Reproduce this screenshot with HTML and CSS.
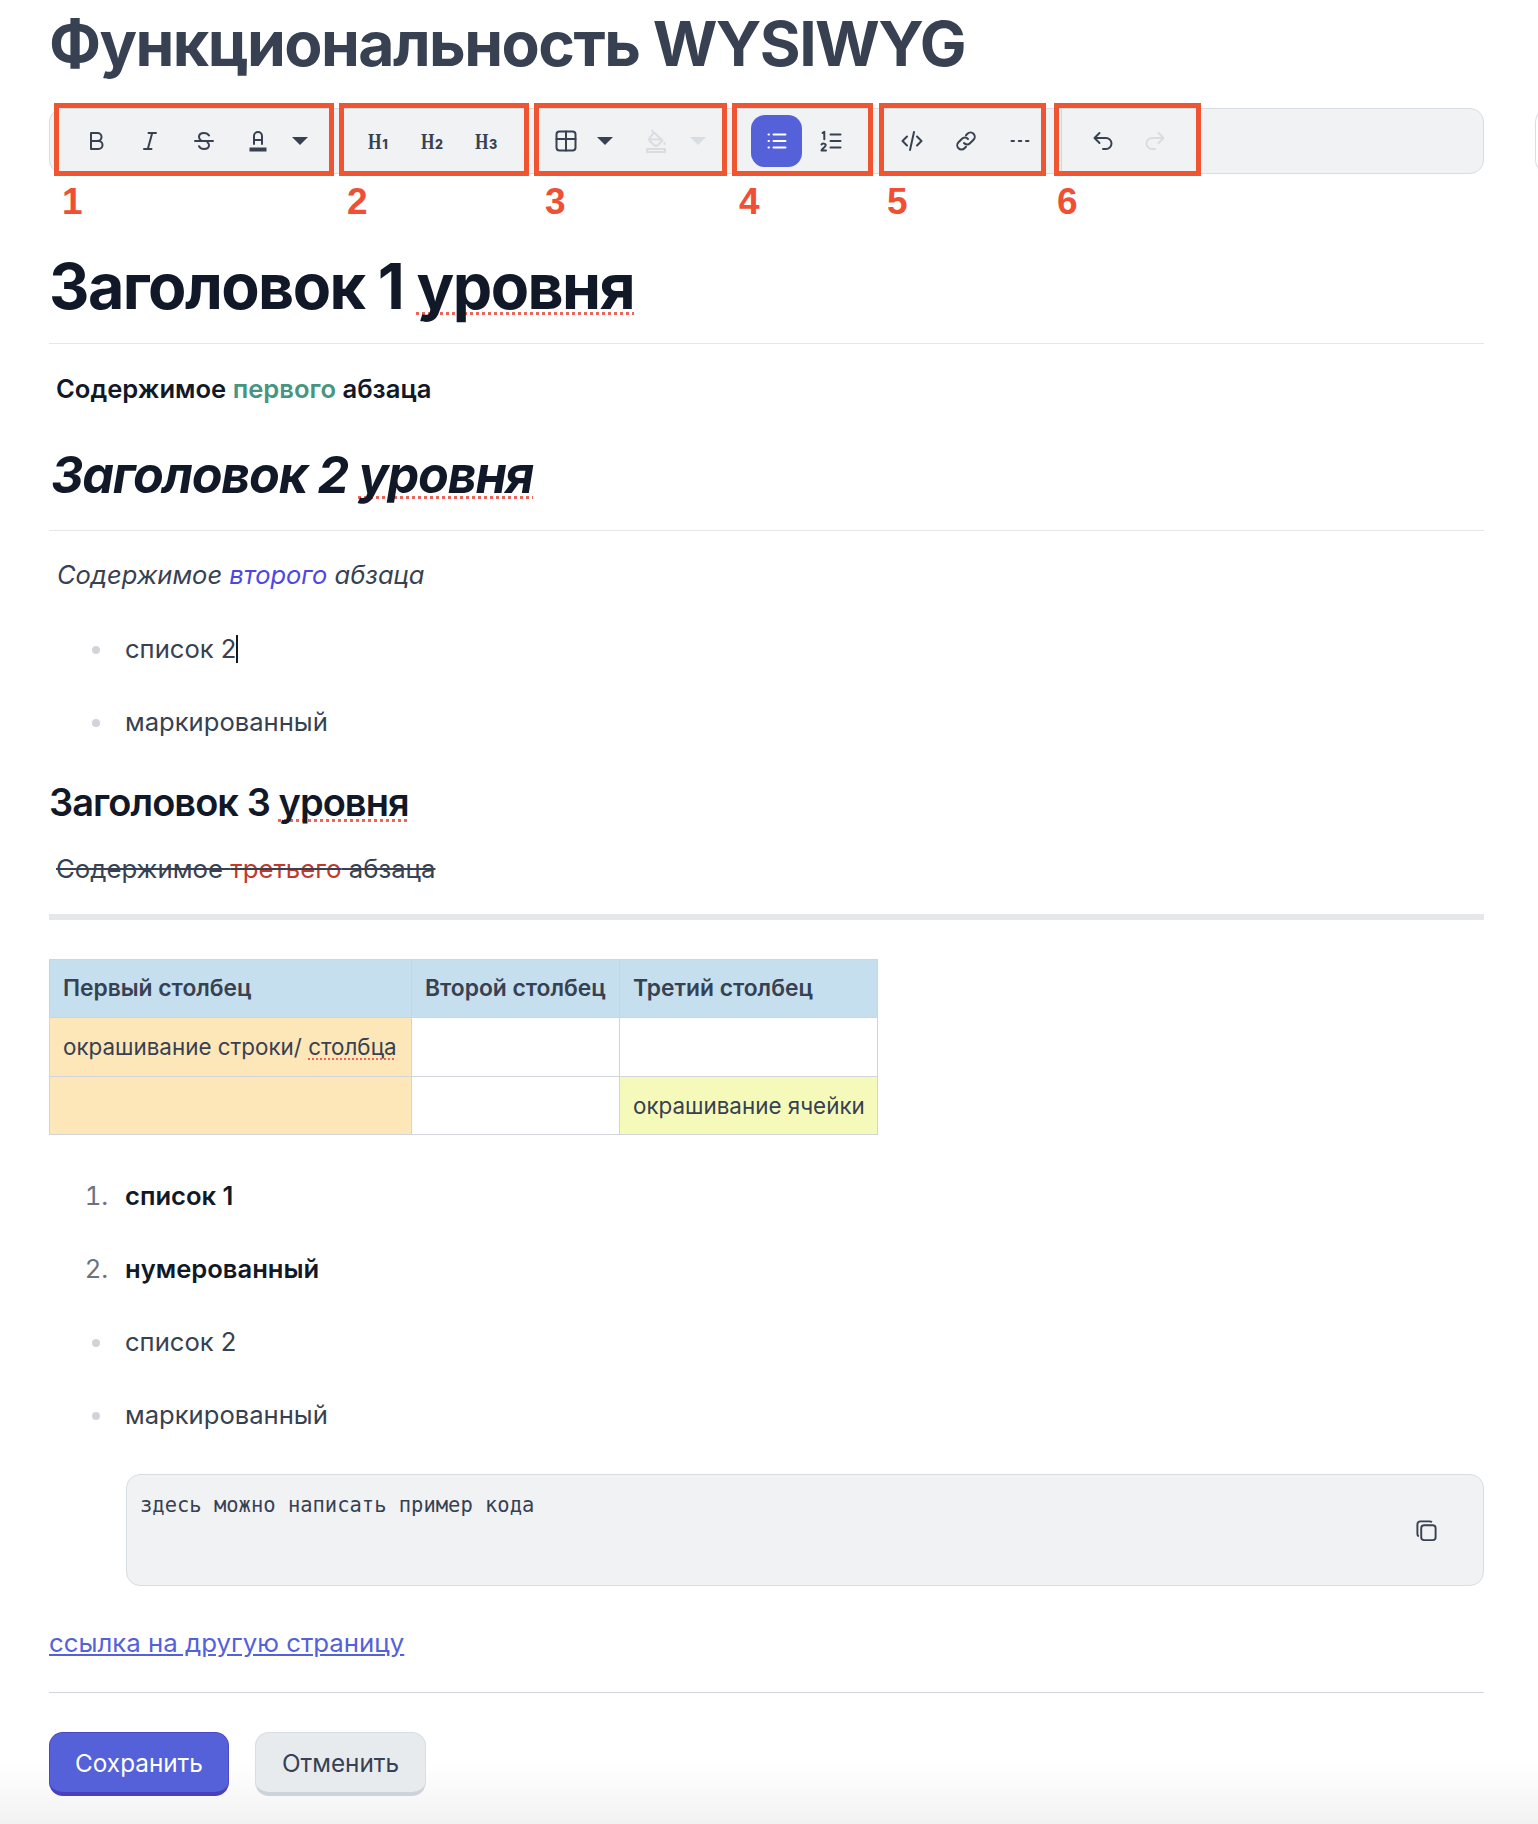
FILE: index.html
```html
<!DOCTYPE html>
<html lang="ru">
<head>
<meta charset="utf-8">
<title>Функциональность WYSIWYG</title>
<link rel="stylesheet" href="styles.css">
</head>
<body>
<main class="page">
  <h1 class="page-title">Функциональность WYSIWYG</h1>

  <div class="toolbar-row">
    <div class="toolbar">
      <div class="tb-group g1">
        <button class="tb"><svg viewBox="0 0 24 24"><path d="M7 4h6.500a4 4 0 0 1 0 8H7zM7 12h7.500a4 4 0 0 1 0 8H7z"/></svg></button>
        <button class="tb"><svg viewBox="0 0 24 24"><path d="M10.500 4H18M6 20h7.500M14.200 4L9.800 20"/></svg></button>
        <button class="tb"><svg viewBox="0 0 24 24"><path d="M17 6.500C16 4.800 14.200 4 12 4 9.200 4 7 5.500 7 8c0 1.500.8 2.600 2 3.300M15.500 13.500c1 .7 1.500 1.600 1.500 2.800 0 2.500-2.200 3.700-5 3.700-2.300 0-4.200-.9-5-2.800M3 12h18"/></svg></button>
        <button class="tb"><svg viewBox="0 0 24 24"><path d="M8 15V7a4 4 0 0 1 8 0v8M8 11h8"/><rect class="fill" x="3.500" y="18.500" width="17" height="4"/></svg></button>
        <button class="tb caret-btn"><span class="caret"></span></button>
      </div>
      <div class="tb-group g2">
        <button class="tb"><span class="hd"><span class="hd-h">H</span><sub>1</sub></span></button>
        <button class="tb"><span class="hd"><span class="hd-h">H</span><sub>2</sub></span></button>
        <button class="tb"><span class="hd"><span class="hd-h">H</span><sub>3</sub></span></button>
      </div>
      <div class="tb-group g3">
        <button class="tb"><svg viewBox="0 0 24 24"><rect x="2.500" y="2.500" width="19" height="19" rx="3"/><path d="M2.500 10h19M12 2.500v19"/></svg></button>
        <button class="tb caret-btn small"><span class="caret"></span></button>
        <button class="tb off fill-btn"><svg viewBox="0 0 24 24"><path d="M8 1.500l2 2.500M10 3.500l8.500 8L14 16a3 3 0 0 1-4 0l-3.800-3.500a3 3 0 0 1 0-4.200zM5 10.500h11.500M20.500 14v1"/><rect x="3" y="20" width="18" height="3"/></svg></button>
        <button class="tb caret-btn small last off"><span class="caret"></span></button>
      </div>
      <div class="tb-group g4">
        <button class="tb active"><svg viewBox="0 0 24 24"><path d="M8.500 5.500h12M8.500 12h12M8.500 18.500h12M3.500 5.500h.5M3.500 12h.5M3.500 18.500h.5"/></svg></button>
        <button class="tb"><svg viewBox="0 0 24 24"><path d="M11.500 5.500h10M11.500 12h10M11.500 18.500h10M3.500 4l1.800-1.200v7.500M2.500 15.500c.4-1.200 4.200-1.400 4.200.8 0 1.800-4.200 3.500-4.200 5.200h4.500"/></svg></button>
      </div>
      <div class="tb-group g5">
        <button class="tb"><svg viewBox="0 0 24 24"><path d="M7 7.500L2.500 12 7 16.500M17 7.500l4.500 4.500-4.500 4.500M14 3l-4 18"/></svg></button>
        <button class="tb"><svg viewBox="0 0 24 24"><path d="M10 14a4 4 0 0 0 6 .2l3.500-3.500a4.200 4.200 0 0 0-6-6L12 6.200M14 10a4 4 0 0 0-6-.2l-3.500 3.500a4.200 4.200 0 0 0 6 6l1.500-1.500"/></svg></button>
        <button class="tb"><svg viewBox="0 0 24 24"><path d="M3.500 12h2.500M10.800 12h2.500M18 12h2.500"/></svg></button>
      </div>
      <div class="tb-group g6">
        <button class="tb"><svg viewBox="0 0 24 24"><path d="M8.500 4L3.500 9l5 5M3.500 9H15a5.500 5.500 0 0 1 0 11h-3"/></svg></button>
        <button class="tb off redo"><svg viewBox="0 0 24 24"><path d="M15.500 4l5 5-5 5M20.500 9H9a5.500 5.500 0 0 0 0 11h3"/></svg></button>
      </div>
    </div>
    <div class="toolbar-next"></div>
    <span class="mark m1"></span><span class="mark m2"></span><span class="mark m3"></span>
    <span class="mark m4"></span><span class="mark m5"></span><span class="mark m6"></span>
    <span class="num n1">1</span><span class="num n2">2</span><span class="num n3">3</span>
    <span class="num n4">4</span><span class="num n5">5</span><span class="num n6">6</span>
  </div>

  <article class="editor">
    <h2 class="h-1">Заголовок 1 <span class="spell">уровня</span></h2>
    <p class="para first"><strong>Содержимое <span class="green">первого</span> абзаца</strong></p>
    <h2 class="h-2"><em>Заголовок 2 <span class="spell">уровня</span></em></h2>
    <p class="para second"><em>Содержимое <span class="blue">второго</span> абзаца</em></p>
    <ul class="list top-list">
      <li>список 2<span class="cursor"></span></li>
      <li>маркированный</li>
    </ul>
    <h3 class="h-3">Заголовок 3 <span class="spell">уровня</span></h3>
    <p class="para third"><s>Содержимое <span class="red">третьего</span> абзаца</s></p>
    <hr class="thick">
    <table class="grid">
      <colgroup><col class="c1"><col class="c2"><col class="c3"></colgroup>
      <thead><tr><th>Первый столбец</th><th>Второй столбец</th><th>Третий столбец</th></tr></thead>
      <tbody>
        <tr class="tall"><td class="orange">окрашивание строки/ <span class="spell small">столбца</span></td><td></td><td></td></tr>
        <tr><td class="orange"></td><td></td><td class="yellow">окрашивание ячейки</td></tr>
      </tbody>
    </table>
    <ol class="list num-list">
      <li><strong>список 1</strong></li>
      <li><strong>нумерованный</strong></li>
    </ol>
    <ul class="list bottom-list">
      <li>список 2</li>
      <li>маркированный</li>
    </ul>
    <div class="code">
      <code>здесь можно написать пример кода</code>
      <svg class="copy" viewBox="0 0 24 24"><rect x="6.500" y="6.500" width="15" height="15.500" rx="3"/><path d="M17.500 3.500A2.500 2.500 0 0 0 15.500 2.500H5.500a3 3 0 0 0-3 3V16a2.500 2.500 0 0 0 1.500 2"/></svg>
    </div>
    <p class="link-row"><a href="#">ссылка на другую страницу</a></p>
  </article>

  <footer class="actions">
    <button class="btn primary">Сохранить</button>
    <button class="btn plain">Отменить</button>
  </footer>
</main>
<div class="fade"></div>
</body>
</html>
```
FILE: styles.css
```css
* { box-sizing: border-box; }
html, body { margin: 0; padding: 0; background: #fff; }
body { width: 1538px; height: 1824px; overflow: hidden; position: relative; font-family: Inter, "Noto Sans", sans-serif; color: #374151; }
.page { position: relative; z-index: 1; padding: 0 54px 0 49px; }
.page-title { margin: 0; padding-top: 8px; height: 108px; font-size: 62.4px; line-height: 72px; font-weight: 700; letter-spacing: -0.025em; color: #374151; white-space: nowrap; }

.toolbar-row { position: relative; height: 66px; }
.toolbar { display: flex; height: 66px; width: 1435px; background: #f1f2f4; border: 1px solid #d8dde3; border-radius: 14px; padding-left: 19px; align-items: center; }
.toolbar-next { position: absolute; left: 1486px; top: 0; width: 40px; height: 66px; border: 1px solid #d8dde3; border-right: 0; border-radius: 14px 0 0 14px; }
.tb-group { display: flex; align-items: center; height: 100%; }
.tb { flex: none; width: 54px; height: 52px; display: flex; align-items: center; justify-content: center; padding: 0; border: 0; background: transparent; color: #374151; border-radius: 14px; }
.tb svg { width: 24px; height: 24px; fill: none; stroke: currentColor; stroke-width: 2; stroke-linecap: round; stroke-linejoin: round; }
.tb svg .fill { fill: currentColor; stroke: none; }
.tb.off { color: #d8dde2; }
.tb.active { background: #5561d9; color: #fff; width: 51px; margin-right: 2px; }
.caret-btn { width: 30px; }
.caret-btn.small { width: 24px; }
.caret-btn.small.last { width: 30px; }
.fill-btn { margin-left: 12px; }
.redo { margin-left: -2px; }
.caret { width: 0; height: 0; border-left: 8px solid transparent; border-right: 8px solid transparent; border-top: 8px solid currentColor; }
.g2 { margin-left: 36px; }
.g3 { margin-left: 26px; }
.g4 { margin-left: 38px; }
.g5 { margin-left: 27px; }
.g6 { margin-left: 14px; padding-left: 14px; border-left: 1px solid #d5d9de; }
.hd { display: flex; align-items: flex-end; line-height: 1; }
.hd-h { display: block; font-family: "Liberation Serif", serif; font-size: 24px; line-height: 20px; font-weight: 700; width: 13px; transform: scaleX(.72); transform-origin: 0 50%; white-space: nowrap; }
.hd sub { display: block; font-size: 12.5px; line-height: 12px; font-weight: 800; font-family: Inter, sans-serif; margin-left: 1px; vertical-align: baseline; }

.mark { position: absolute; top: -5px; height: 73px; border: 5px solid #ee5530; }
.m1 { left: 5px; width: 280px; }
.m2 { left: 290px; width: 190px; }
.m3 { left: 485px; width: 193px; }
.m4 { left: 683px; width: 141px; }
.m5 { left: 830px; width: 167px; }
.m6 { left: 1005px; width: 147px; }
.num { position: absolute; top: 73px; font-family: "Liberation Sans", sans-serif; font-weight: 700; font-size: 37px; line-height: 42px; color: #ee4f35; }
.n1 { left: 13px; }
.n2 { left: 298px; }
.n3 { left: 496px; }
.n4 { left: 690px; }
.n5 { left: 838px; }
.n6 { left: 1008px; }

.editor { color: #374151; }
.h-1 { margin: 0; height: 170px; padding-top: 74px; font-size: 62.7px; line-height: 76px; font-weight: 700; letter-spacing: -0.025em; color: #111827; border-bottom: 1px solid #e5e7eb; }
.spell { text-decoration: underline dotted #ef6458 3px; text-underline-offset: 3px; text-decoration-skip-ink: none; }
.spell.small { text-decoration-thickness: 2px; }
.para { margin: 0; font-size: 25.6px; line-height: 36px; }
.first { padding: 27px 0 0 7px; color: #111827; font-weight: 600; }
.first strong { font-weight: 600; }
.green { color: #479580; }
.h-2 { margin: 1px 0 0; height: 123px; padding-top: 37px; padding-left: 2px; font-size: 50.3px; line-height: 60px; font-weight: 700; letter-spacing: -0.025em; color: #111827; border-bottom: 1px solid #e5e7eb; }
.second { padding: 26px 0 0 8px; font-size: 25.5px; }
.blue { color: #4f46e5; }
.list { margin: 0; padding: 0 0 0 66px; font-size: 25.6px; line-height: 36px; }
.list li { padding: 0 0 0 10px; margin-top: 37px; }
.list li:first-child { margin-top: 0; }
.list li::marker { color: #d1d5db; }
.top-list { margin-top: 38px; }
.cursor { display: inline-block; width: 2px; height: 28px; background: #111827; vertical-align: -5px; }
.h-3 { margin: 40px 0 0; font-size: 38px; line-height: 44px; font-weight: 600; letter-spacing: -0.025em; color: #111827; }
.third { padding: 27px 0 0 7px; font-size: 25.75px; }
.red { color: #c0392b; }
.thick { margin: 27px 0 0; height: 6px; border: 0; background: #e5e7eb; }
.grid { margin-top: 39px; border-collapse: collapse; table-layout: fixed; width: 828px; }
.c1 { width: 362px; }
.c2 { width: 208px; }
.c3 { width: 258px; }
.grid th, .grid td { height: 58px; padding: 0 13px; border: 1px solid #d1d5db; text-align: left; white-space: nowrap; font-size: 22.4px; line-height: 30px; }
.grid .tall td { height: 59px; }
.grid th { background: #c5dfee; font-size: 22.8px; font-weight: 600; border-color: #c0d8e8; padding-bottom: 2px; }
.orange { background: #fde6b8; }
.yellow { background: #f5fabb; }
.num-list { margin-top: 43px; }
.num-list li::marker { color: #6b7280; }
.num-list strong { color: #111827; font-weight: 600; }
.bottom-list { margin-top: 37px; }
.code { position: relative; margin: 41px 0 0 77px; height: 112px; background: #f1f2f4; border: 1px solid #d8dde3; border-radius: 14px; padding: 16px 13px; }
.code code { font-family: "DejaVu Sans Mono", monospace; font-size: 20.48px; line-height: 28px; color: #374151; }
.copy { position: absolute; right: 45px; top: 44px; width: 23px; height: 23px; fill: none; stroke: #374151; stroke-width: 2; }
.link-row { margin: 39px 0 0; font-size: 25.8px; line-height: 36px; }
.link-row a { color: #5561d9; }
.actions { margin-top: 31px; padding-top: 39px; border-top: 1px solid #d1d5db; display: flex; gap: 26px; }
.btn { height: 64px; border-radius: 14px; font-family: Inter, sans-serif; font-size: 24.3px; padding: 0 20px; }
.primary { width: 180px; background: #5561d9; color: #fff; border: 1px solid #4f46c5; border-bottom: 4px solid #4b3fc0; }
.plain { width: 171px; background: #e8ebee; color: #374151; border: 1px solid #d8dde3; border-bottom: 4px solid #cdd3da; }
.fade { position: absolute; left: 0; right: 0; bottom: 0; height: 60px; pointer-events: none; background: linear-gradient(to bottom, rgba(242,242,243,0), rgba(242,242,243,1)); }
```
